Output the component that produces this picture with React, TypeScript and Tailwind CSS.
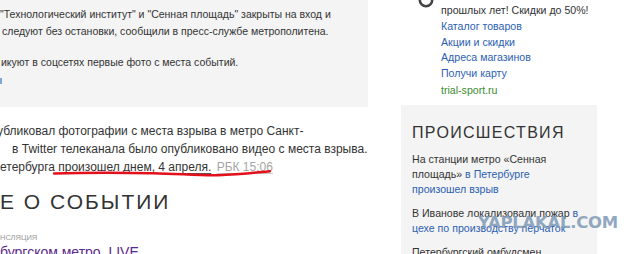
import React from 'react'

const font = { fontFamily: '"Liberation Sans", Arial, sans-serif' }

function RingIcon() {
  return (
    <svg width="16" height="16" viewBox="0 0 16 16" className="block">
      <circle cx="8" cy="8" r="6.2" fill="none" stroke="#444" strokeWidth="2.6" />
    </svg>
  )
}

function RedStroke() {
  return (
    <svg
      width="230"
      height="12"
      viewBox="0 0 230 12"
      className="absolute left-[48px] top-[167px] pointer-events-none"
    >
      <path
        d="M6 6.5 C 40 5.5, 80 5.8, 105 6.2 C 130 6.6, 150 8.6, 170 8.2 C 190 7.8, 205 5.8, 222 4.2"
        fill="none"
        stroke="#e3101c"
        strokeWidth="2.4"
        strokeLinecap="round"
      />
    </svg>
  )
}

export default function App() {
  return (
    <div className="relative w-[640px] h-[254px] overflow-hidden bg-white text-[#333]" style={font}>
      <div className="flex">
        {/* основная колонка */}
        <div className="w-[368px] shrink-0">
          <div className="h-[107px] bg-[#f4f4f4] pt-[6px] text-[10.5px] leading-[17px] whitespace-nowrap">
            <p>"Технологический институт" и "Сенная площадь" закрыты на вход и</p>
            <p className="pl-[2px]">следуют без остановки, сообщили в пресс-службе метрополитена.</p>
            <p className="mt-[14px] pl-[1px]">икуют в соцсетях первые фото с места событий.</p>
            <div className="mt-[7px] h-[6px] w-[2px] bg-[#7fa6d8]" />
          </div>

          <div className="mt-[15px] text-[12px] leading-[18px] whitespace-nowrap">
            <p className="-ml-[3px]">убликовал фотографии с места взрыва в метро Санкт-</p>
            <p className="pl-[12px]">в Twitter телеканала было опубликовано видео с места взрыва.</p>
            <p>
              етербурга <span className="underline underline-offset-2 decoration-[#555]">произошел днем, 4 апреля.</span>{' '}
              <span className="ml-[2px] text-[#a5a5a5] underline underline-offset-2 decoration-[#c8c8c8]">РБК 15:06</span>
            </p>
          </div>

          <h2 className="mt-[12px] text-[21px] leading-[28px] tracking-[2px] text-[#333] whitespace-nowrap">
            Е О СОБЫТИИ
          </h2>
          <div className="mt-[17px] text-[7.5px] leading-[10px] uppercase text-[#999] whitespace-nowrap">нсляция</div>
          <div className="text-[14px] leading-[18px] text-[#5b2a8c] whitespace-nowrap">бургском метро. LIVE</div>
        </div>

        {/* правая колонка */}
        <div className="ml-[33px] w-[196px] shrink-0">
          <div className="flex">
            <div className="w-[40px] shrink-0 pl-[17px] -mt-[8px]">
              <RingIcon />
            </div>
            <div className="pt-[2px] whitespace-nowrap text-[10.6px]">
              <p className="leading-[16px]">прошлых лет! Скидки до 50%!</p>
              <ul className="mt-[1px] leading-[15.5px] text-[#2c5fb3]">
                <li>Каталог товаров</li>
                <li>Акции и скидки</li>
                <li>Адреса магазинов</li>
                <li>Получи карту</li>
              </ul>
              <p className="mt-[1px] leading-[16px] text-[#3b8a2e]">trial-sport.ru</p>
            </div>
          </div>

          <div className="mt-[7px] h-[200px] bg-[#f4f4f4] pl-[11px] pt-[18px] whitespace-nowrap">
            <h3 className="text-[16px] leading-[20px] tracking-[1.3px] text-[#333]">ПРОИСШЕСТВИЯ</h3>
            <div className="mt-[9px] flex flex-col gap-[9px] text-[10.6px] leading-[15px]">
              <p>
                На станции метро «Сенная
                <br />
                площадь» <span className="text-[#2c5fb3]">в Петербурге</span>
                <br />
                <span className="text-[#2c5fb3]">произошел взрыв</span>
              </p>
              <p>
                В Иванове локализовали пожар <span className="text-[#2c5fb3]">в</span>
                <br />
                <span className="text-[#2c5fb3]">цехе по производству перчаток</span>
              </p>
              <p>Петербургский омбудсмен</p>
            </div>
          </div>
        </div>
      </div>

      <RedStroke />

      {/* водяной знак */}
      <div
        className="absolute left-[478px] top-[213px] text-[16.5px] leading-[20px] font-bold text-[#7f9ab8] opacity-85 pointer-events-none"
        style={{ fontFamily: '"DejaVu Sans", "Liberation Sans", sans-serif', letterSpacing: '-0.3px' }}
      >
        YAPLAKAL.COM
      </div>
    </div>
  )
}
